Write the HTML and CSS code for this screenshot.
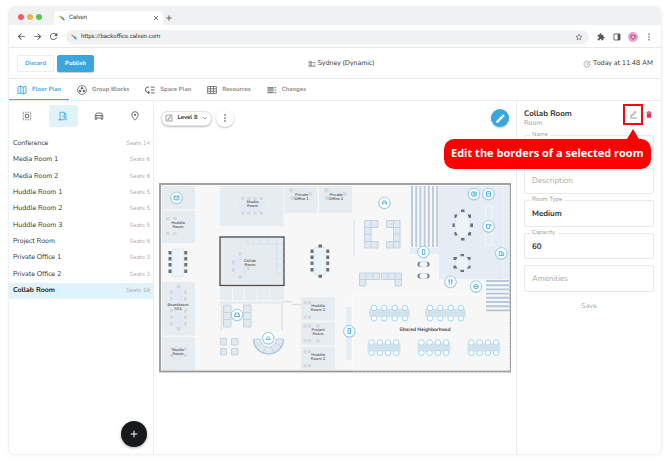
FILE: index.html
```html
<!DOCTYPE html>
<html lang="en">
<head>
<meta charset="utf-8">
<title>Calven</title>
<link rel="stylesheet" href="styles.css">
</head>
<body>
<div class="window">
  <div class="tabstrip">
    <span class="dots"><i class="dot red"></i><i class="dot amber"></i><i class="dot green"></i></span>
    <div class="browser-tab">
      <svg class="logo" viewBox="0 0 6 6"><path d="M1.2 1.5l1.2.8" stroke="#f5a623" stroke-width="1.7" stroke-linecap="round"/><path d="M3.2 2.8l1.6 1.8" stroke="#2e9bdc" stroke-width="1.7" stroke-linecap="round"/></svg>
      <span>Calven</span>
      <button class="plain close" aria-label="Close tab"><svg viewBox="0 0 6 6"><path d="M1 1l4 4M5 1l-4 4" stroke="#555" stroke-width=".8"/></svg></button>
    </div>
    <button class="plain newtab" aria-label="New tab"><svg viewBox="0 0 6 6"><path d="M3 .4v5.2M.4 3h5.2" stroke="#555" stroke-width=".9"/></svg></button>
  </div>
  <div class="toolbar">
    <button class="plain" aria-label="Back"><svg viewBox="0 0 24 24"><path fill="#555" d="M21 11H6.800l5.600-6.600L11 3l-9 9 9 9 1.400-1.400L6.800 13H21z"/></svg></button>
    <button class="plain" aria-label="Forward"><svg viewBox="0 0 24 24"><path fill="#555" d="M3 11h14.200l-5.600-6.600L13 3l9 9-9 9-1.400-1.400 5.600-6.600H3z"/></svg></button>
    <button class="plain" aria-label="Reload"><svg viewBox="0 0 24 24"><path fill="#555" d="M18.700 5.300A9.400 9.400 0 1 0 21.100 14h-2.300A7.200 7.200 0 1 1 12 4.800c2 0 3.700.8 5 2.200L13.500 10.500H22V2z"/></svg></button>
    <div class="address">
      <svg class="logo" viewBox="0 0 6 6"><path d="M1.200 1.500l1.200.8" stroke="#f5a623" stroke-width="1.700" stroke-linecap="round"/><path d="M3.200 2.800l1.600 1.800" stroke="#2e9bdc" stroke-width="1.700" stroke-linecap="round"/></svg>
      <input type="text" aria-label="Address" value="https://backoffice.calven.com">
      <svg class="ico8" viewBox="0 0 24 24"><path d="M12 3.500l2.600 5.800 6.300.6-4.800 4.200 1.400 6.200-5.500-3.300-5.500 3.300 1.400-6.200-4.800-4.200 6.300-.6z" fill="none" stroke="#666" stroke-width="2"/></svg>
    </div>
    <div class="extras">
      <svg viewBox="0 0 24 24"><path fill="#555" d="M20.500 11H19V7a2 2 0 0 0-2-2h-4V3.500a2.500 2.500 0 0 0-5 0V5H4a2 2 0 0 0-2 2v3.800h1.500a2.700 2.700 0 0 1 0 5.400H2V20a2 2 0 0 0 2 2h3.800v-1.500a2.700 2.700 0 0 1 5.400 0V22H17a2 2 0 0 0 2-2v-4h1.500a2.500 2.500 0 0 0 0-5z"/></svg>
      <svg viewBox="0 0 24 24"><path fill="none" stroke="#555" stroke-width="2.500" d="M3 3h18v18H3z"/><path fill="#555" d="M14 3h7v18h-7z"/></svg>
      <svg class="avatar" viewBox="0 0 24 24"><circle cx="12" cy="12" r="12" fill="#e8a5cf"/><path d="M5 8c4-5 7 2 11-2l4 5-7 8-7-5z" fill="#cd4d9a"/><path d="M8 8l4 3 4-2-2 6-4-1z" fill="#fbe2f1"/></svg>
      <svg viewBox="0 0 24 24"><g fill="#555"><circle cx="12" cy="3.500" r="2.200"/><circle cx="12" cy="12" r="2.200"/><circle cx="12" cy="20.500" r="2.200"/></g></svg>
    </div>
  </div>

  <header class="header">
    <div class="actions"><button class="btn">Discard</button><button class="btn primary">Publish</button></div>
    <div class="site"><svg class="ico8" viewBox="0 0 24 24"><path fill="#999" d="M12 7V3H2v18h20V7zM6 19H4v-2h2zm0-4H4v-2h2zm0-4H4V9h2zm0-4H4V5h2zm4 12H8v-2h2zm0-4H8v-2h2zm0-4H8V9h2zm0-4H8V5h2zm10 12h-8V9h8zm-2-8h-4v2h4zm0 4h-4v2h4z"/></svg>Sydney (Dynamic)</div>
    <div class="updated"><svg class="ico8" viewBox="0 0 24 24"><path d="M17 4.500A9 9 0 1 0 21 12M21 3v6h-6M12 7v6l4 2" fill="none" stroke="#888" stroke-width="2"/></svg>Today at 11:48 AM</div>
  </header>

  <nav class="nav">
    <a href="#" class="active"><svg viewBox="0 0 24 24"><path d="M2.500 4.500L9 2.500l6 2.500 6.500-2v16.500L15 21.500 9 19l-6.500 2zM9 2.500V19M15 5v16.500" fill="none" stroke="currentColor" stroke-width="2.200"/></svg>Floor Plan</a>
    <a href="#"><svg viewBox="0 0 24 24"><circle cx="12" cy="12" r="10.500" fill="none" stroke="#666" stroke-width="2"/><g fill="#666"><circle cx="12" cy="7.500" r="2.900"/><circle cx="7.500" cy="14.500" r="2.900"/><circle cx="16.500" cy="14.500" r="2.900"/></g></svg>Group Blocks</a>
    <a href="#"><svg viewBox="0 0 24 24"><path d="M10 5H7a5.500 6 0 0 0 0 13h3M7 14l4 4-4 4M14 5h9M14 12h9M14 19h9" fill="none" stroke="#666" stroke-width="2.400"/></svg>Space Plan</a>
    <a href="#"><svg viewBox="0 0 24 24"><path d="M1.500 3.500h21v17h-21zM8.500 3.500v17M15.500 3.500v17M1.500 9h21M1.500 15h21" fill="none" stroke="#666" stroke-width="2"/></svg>Resources</a>
    <a href="#"><svg viewBox="0 0 24 24"><path d="M1 4.500h15v3H1zm0 4h15v3H1zm0 4h15v3H1zm0 4h15v3H1zM18 4.500h4v3h-4zm0 6h4v3h-4zm0 6h4v3h-4z" fill="#888"/></svg>Changes</a>
  </nav>

  <div class="content">
    <aside class="rooms">
      <div class="kinds">
        <button aria-label="Desks"><svg viewBox="0 0 24 24"><path d="M3 3h18v18H3z" fill="none" stroke="#555" stroke-width="2" stroke-dasharray="2 2"/><path d="M8 8h8v8H8z" fill="none" stroke="#555" stroke-width="2"/></svg></button>
        <button class="on" aria-label="Rooms"><svg viewBox="0 0 24 24"><path d="M2 21h3V3h10v18H2M15 6h4v15h3" fill="none" stroke="#35a6df" stroke-width="2"/><path d="M11 11h2v3h-2z" fill="#35a6df"/></svg></button>
        <button aria-label="Parking"><svg viewBox="0 0 24 24"><path d="M3 11l3-6h12l3 6v9h-3v-3H6v3H3zM3 11h18" fill="none" stroke="#555" stroke-width="2"/><circle cx="7" cy="14" r="1.500" fill="#555"/><circle cx="17" cy="14" r="1.500" fill="#555"/></svg></button>
        <button aria-label="Points of interest"><svg viewBox="0 0 24 24"><path d="M12 22S4.500 14.500 4.500 9a7.500 7.500 0 0 1 15 0C19.500 14.500 12 22 12 22z" fill="none" stroke="#555" stroke-width="2"/><circle cx="12" cy="9" r="2.500" fill="#555"/></svg></button>
      </div>
      <ul class="list">
        <li><span>Conference</span><small>Seats 14</small></li>
        <li><span>Media Room 1</span><small>Seats 6</small></li>
        <li><span>Media Room 2</span><small>Seats 6</small></li>
        <li><span>Huddle Room 1</span><small>Seats 5</small></li>
        <li><span>Huddle Room 2</span><small>Seats 5</small></li>
        <li><span>Huddle Room 3</span><small>Seats 5</small></li>
        <li><span>Project Room</span><small>Seats 6</small></li>
        <li><span>Private Office 1</span><small>Seats 3</small></li>
        <li><span>Private Office 2</span><small>Seats 3</small></li>
        <li class="selected"><span>Collab Room</span><small>Seats 16</small></li>
      </ul>
      <button class="add" aria-label="Add room"><svg viewBox="0 0 8 8"><path d="M4 .7v6.600M.7 4h6.600" stroke="#fff" stroke-width="1"/></svg></button>
    </aside>

    <main class="plan">
      <div class="plan-bar">
        <button class="level"><svg viewBox="0 0 24 24"><path d="M3 3h18v18H3zM7 17h4v-5h4V7h3" fill="none" stroke="#777" stroke-width="2"/></svg>Level 8<svg class="caret" viewBox="0 0 6 6"><path d="M1 2l2 2 2-2" fill="none" stroke="#999" stroke-width=".9"/></svg></button>
        <button class="round" aria-label="More"><svg viewBox="0 0 24 24"><g fill="#444"><circle cx="12" cy="3" r="2.500"/><circle cx="12" cy="12" r="2.500"/><circle cx="12" cy="21" r="2.500"/></g></svg></button>
        <button class="round edit" aria-label="Edit plan"><svg viewBox="0 0 24 24"><path fill="#fff" d="M3 17.200V21h3.800L17.900 9.900l-3.800-3.800zM20.700 7a1 1 0 0 0 0-1.400l-2.300-2.300a1 1 0 0 0-1.400 0l-1.900 1.900 3.800 3.800z"/></svg></button>
      </div>
      <svg class="map" viewBox="159 183 352 190" role="img" aria-label="Level 8 floor plan">
        <defs>
          <g id="seat4"><path d="M-6 -5h3.200v3.200h-3.200zM-1.600 -5h3.200v3.200h-3.200z"/></g>
          <g id="pin"><circle r="6.200" cy=".6" fill="#b9c7d0" opacity=".55" stroke="none"/><circle r="5.700" fill="#fff" stroke="#86cbe9" stroke-width=".9"/></g>
          <g id="bench4">
            <rect x="-20.500" y="-4" width="41" height="8" fill="#d7e5ed"/><path d="M-10 -4v8M0 -4v8M10 -4v8M-20 0h40" stroke="#c3d7e2" stroke-width=".5"/>
            <g fill="#fff" stroke="#90d3f0" stroke-width=".9"><circle cx="-15.500" cy="-5" r="2.800"/><circle cx="-5.200" cy="-5" r="2.800"/><circle cx="5.200" cy="-5" r="2.800"/><circle cx="15.500" cy="-5" r="2.800"/><circle cx="-15.500" cy="5.300" r="2.800"/><circle cx="-5.200" cy="5.300" r="2.800"/><circle cx="5.200" cy="5.300" r="2.800"/><circle cx="15.500" cy="5.300" r="2.800"/></g>
          </g>
          <g id="bench3">
            <rect x="-16.500" y="-4" width="33" height="8" fill="#d7e5ed"/><path d="M-8 -4v8M0 -4v8M8 -4v8M-16 0h32" stroke="#c3d7e2" stroke-width=".5"/>
            <g fill="#fff" stroke="#90d3f0" stroke-width=".9"><circle cx="-12.400" cy="-5" r="2.800"/><circle cx="-4.200" cy="-5" r="2.800"/><circle cx="4.100" cy="-5" r="2.800"/><circle cx="12.300" cy="-5" r="2.800"/><circle cx="-12.400" cy="5.300" r="2.800"/><circle cx="-4.200" cy="5.300" r="2.800"/><circle cx="4.100" cy="5.300" r="2.800"/><circle cx="12.300" cy="5.300" r="2.800"/></g>
          </g>
          <g id="meeting">
            <path d="M-9.500 -12h3.200v3.500h-3.200zM-9.500 -6h3.200v3.500h-3.200zM-9.500 0h3.200v3.500h-3.200zM-9.500 6.500h3.200V10h-3.200zM6 -12h3.200v3.500H6zM6 -6h3.200v3.500H6zM6 0h3.200v3.500H6zM6 6.500h3.200V10H6z" fill="#6b6f73"/>
            <rect x="-6" y="-14" width="12" height="27.500" rx="2" fill="#edf4f8" stroke="#d3e2ec" stroke-width=".7"/>
          </g>
          <g id="duo"><rect x="-6" y="-2.500" width="12" height="5" rx="2.500" fill="#777"/><ellipse rx="4" ry="3" fill="#f0f6fa" stroke="#cbd8e0" stroke-width=".6"/></g>
        </defs>
        <rect x="160" y="184" width="350.500" height="187.500" fill="#f7f7f7" stroke="#999" stroke-width="1.800"/>

        <g fill="#e6ecf0">
          <path d="M162 186h33v23h-33zM162 210.500h33V243h-33zM162 282h33v53.500h-33zM162 337h33v33h-33z"/>
          <path d="M220 186h63.500v40H220zM284.500 186h33v27h-33zM319 186h33v27h-33z"/>
          <path d="M301 297.500h34v23h-34zM301 322h34v23h-34zM301 346.500h34v23h-34z"/>
          <path d="M220 287h64v13h-64z"/>
        </g>
        <path d="M232.500 287v13M244.500 287v13M257 287v13M270 287v13" stroke="#f7f7f7" stroke-width=".8"/>
        <rect x="220" y="237" width="64" height="48.500" fill="#e5ebef" stroke="#4b4b4b" stroke-width="1.300"/>
        <path d="M246.500 238v6h36.500M253.500 238v6M260.500 238v6M268 238v6M276.500 238v36h7M276.500 251h7M276.500 258.500h7M276.500 266h7" fill="none" stroke="#d2deec" stroke-width=".7"/>
        <path d="M220 302.500h63M221.500 302v28M282 302v28" fill="none" stroke="#e1e9f0" stroke-width="2"/>
        <path d="M283 301.500h9M292 304.500h9" stroke="#dfdfdf" stroke-width="1.500"/>
        <rect x="346" y="307" width="5.500" height="53" fill="#e7edf3"/>
        <rect x="353" y="220.500" width="2" height="35" fill="#e2e9f2"/>

        <rect x="439" y="186" width="70.500" height="93" fill="#e6ecf4"/>
        <rect x="410" y="248" width="29" height="6" fill="#e6ecf4"/>
        <rect x="485.500" y="206" width="6.500" height="39" fill="none" stroke="#f4f7fa" stroke-width=".9"/>
        <path d="M503 186v93" stroke="#f4f7fa" stroke-width=".8"/>
        <path d="M412 186v61M416.200 186v61M420.400 186v61M424.600 186v61M428.800 186v61M433 186v61M437.200 186v61" stroke="#b9cbdc" stroke-width="1.900"/>
        <path d="M486 281h24M486 285.200h24M486 289.400h24M486 293.600h24M486 297.800h24M486 302h24M486 306.200h24M486 310.400h24" stroke="#b5c8da" stroke-width="1.900"/>
        <path d="M352.500 370V294.500H486M509.300 370V311" fill="none" stroke="#fff" stroke-width="1.300" stroke-dasharray="1.500 1.500"/>
        <path d="M353 370.800h156.500M509.800 370V187" stroke="#e1e4e6" stroke-width=".8" stroke-dasharray="2 2"/>

        <g fill="#d3d9df">
          <path d="M166 217h3.500v3H166zM173 217h3.500v3H173zM166 232h3.500v3H166zM173 232h3.500v3H173z"/>
          <path d="M241 197h3.500v3H241zM247 197h3.500v3H247zM253 197h3.500v3H253zM259.500 197h3.500v3h-3.500zM241 211.500h3.500v3H241zM247 211.500h3.500v3H247zM253 211.500h3.500v3H253zM259.500 211.500h3.500v3h-3.500z"/>
          <path d="M238.500 252.500h3.500v3h-3.500zM232 260.500h3v4h-3zM232 268h3v4h-3zM246 267h3.500v3.500H246zM238.500 275.500h3.500v3h-3.500z"/>
          <path d="M176.500 285h4v3.500h-4zM170 290.500h3v3.500h-3zM170 297h3v3.500h-3zM170 309h3v3.500h-3zM170 315.500h3v3.500h-3zM170 322h3v3.500h-3zM184 290.500h3v3.500h-3zM184 297h3v3.500h-3zM184 309h3v3.500h-3zM184 315.500h3v3.500h-3zM184 322h3v3.500h-3zM176.500 327h4v3.500h-4z"/>
          <path d="M170 347.500h3v3h-3zM170 354h3v3h-3zM184 347.500h3v3h-3zM184 354h3v3h-3z"/>
          <circle cx="291.500" cy="190.500" r="2.300"/><circle cx="292.500" cy="198" r="2.300"/><circle cx="310" cy="194" r="2.300"/><circle cx="326.500" cy="190.500" r="2.300"/><circle cx="327" cy="198" r="2.300"/><circle cx="344.500" cy="194" r="2.300"/>
          <use href="#seat4" x="309.500" y="306"/><use href="#seat4" x="309.500" y="320.500"/><use href="#seat4" x="309.500" y="329.500"/><use href="#seat4" x="309.500" y="344"/><use href="#seat4" x="309.500" y="355"/><use href="#seat4" x="309.500" y="369"/>
          <path d="M316.500 324.500h3.200v3.200h-3.200zM316.500 339h3.200v3.200h-3.200z"/>
        </g>
        <g fill="#e2e9f3"><rect x="239" y="201" width="26" height="10"/><rect x="235" y="256" width="12" height="19"/><rect x="174" y="289" width="9" height="37"/><rect x="173.500" y="346" width="10" height="14"/><rect x="294" y="188" width="14" height="10"/><rect x="329" y="188" width="13" height="10"/></g>

        <use href="#meeting" x="178" y="263"/>
        <use href="#meeting" x="320" y="261.500"/>
        <path d="M318.500 244.500h3.500v3h-3.500zM318.500 274.800h3.500v3h-3.500z" fill="#6b6f73"/>

        <g fill="#6b6f73"><path d="M461 209.500h3.500v3H461zM461 237.500h3.500v3H461zM452.500 223.500h3v3.500h-3zM470 223.500h3v3.500h-3zM454.500 214.500h3v3.500h-3zM468 214.500h3v3.500h-3zM454.500 232h3v3.500h-3zM468 232h3v3.500h-3z"/><path d="M460.500 254h3.500v3h-3.500zM460.500 269h3.500v3h-3.500zM453.500 257h3.500v3h-3.500zM467 257h3.500v3H467zM453.500 265.500h3.500v3h-3.500zM467 265.500h3.500v3H467z"/></g>
        <ellipse cx="462.500" cy="225" rx="7.500" ry="12.800" fill="#edf4f8" stroke="#d3e2ec" stroke-width=".7"/>
        <circle cx="462.300" cy="263" r="6.800" fill="#edf4f8" stroke="#d3e2ec" stroke-width=".7"/>
        <use href="#duo" x="423.500" y="264.300"/><use href="#duo" x="423.500" y="276"/>

        <g fill="#e0e9f2" stroke="#b9cedd" stroke-width=".8">
          <path d="M364.500 220.500h13.500v7h-7v14h7v6.500h-13.500zM371 220.500v7M364.500 227.500h6.500M364.500 234h6.500M364.500 241.500h6.500M371 241.500v6.500"/>
          <path d="M400 220.500h-13.500v7h7v14h-7v6.500H400zM393.500 220.500v7M400 227.500h-6.500M400 234h-6.500M400 241.500h-6.500M393.500 241.500v6.500"/>
          <path d="M359.500 273h20v6.500h-13.500v6.500h-6.500zM366 273v6.500M373 273v6.500M359.500 279.500h6.500"/>
          <path d="M401.500 273h-20v6.500H395v6.500h6.500zM395 273v6.500M388 273v6.500M401.500 279.500H395"/>
          <path d="M223.500 305h7.500v22h-7.500zM223.500 312.500h7.500M223.500 319.500h7.500M243.500 305h7.500v22h-7.500zM243.500 312.500h7.500M243.500 319.500h7.500"/>
          <path d="M220.500 338.500h6v6.500h-6zM231.500 338.500h6.500v6.500h-6.500zM220.500 348.500h6v6.500h-6zM231.500 348.500h6.500v6.500h-6.500z"/>
          <path d="M253.500 339a15 15 0 0 0 30 0h-7a8 8 0 0 1-16 0zM255.500 347l6.500-4M263 353l3-6.500M274 353l-3-6.500M281.500 347l-6.500-4"/>
        </g>
        <path d="M253.500 339a15 15 0 0 0 30 0" fill="none" stroke="#aac4d6" stroke-width="1.200"/>

        <use href="#bench4" x="389.500" y="313"/><use href="#bench4" x="445.500" y="313"/>
        <use href="#bench3" x="384" y="347.500"/><use href="#bench3" x="433.800" y="347.500"/><use href="#bench3" x="483.800" y="347.500"/>

        <g class="room-label">
          <text x="178" y="224">Huddle</text><text x="178" y="228">Room</text>
          <text x="252.500" y="203">Studio</text><text x="252.500" y="207">Room</text>
          <text x="301.500" y="196">Private</text><text x="301.500" y="200">Office 1</text>
          <text x="336" y="196">Private</text><text x="336" y="200">Office 2</text>
          <text x="250" y="261.500">Collab</text><text x="250" y="265.500">Room</text>
          <text x="178" y="306">Boardroom</text><text x="178" y="310">A01</text>
          <text x="178" y="351">Studio</text><text x="178" y="355">Room</text>
          <text x="318" y="306.500">Huddle</text><text x="318" y="310.500">Room 1</text>
          <text x="318" y="331">Project</text><text x="318" y="335">Room</text>
          <text x="318" y="355.500">Huddle</text><text x="318" y="359.500">Room 2</text>
        </g>
        <text class="zone-label" x="425" y="331">Shared Neighborhood</text>

        <g fill="none" stroke="#45aee0" stroke-width=".9">
          <use href="#pin" x="176.500" y="197.800"/><path d="M174 196h5v3.800h-5zM174.500 196.500l2 1.500 2-1.500"/>
          <use href="#pin" x="384.500" y="202.800"/><path d="M382.500 204.500v-2l.8-1.500h2.400l.8 1.500v2M382.500 203h4"/>
          <use href="#pin" x="474" y="194"/><path d="M471.800 192h4.500v4h-4.500zM474 192v4M474 194h2"/>
          <use href="#pin" x="488.500" y="194"/><path d="M486.500 191.700h4v4.600h-4zM486.500 193.800h4"/>
          <use href="#pin" x="488.500" y="226.300"/><path d="M486.500 224.300h4.500v1.500h-1.500v2.700h-3z"/>
          <use href="#pin" x="501.300" y="253.300"/><path d="M499.200 251.500h2.500v4h-2.500zM501.700 253h2v2.500h-2"/>
          <use href="#pin" x="423.500" y="252"/><path d="M422.300 249.500h2.500v5h-2.500z"/>
          <use href="#pin" x="450.500" y="281.800"/><path d="M449.300 279v5.500M451.800 279v5.500M448.300 281h1.800M451 281h1.800"/>
          <use href="#pin" x="476" y="286.500"/><circle cx="476" cy="286.500" r="2.300"/><path d="M474 286.500h4"/>
          <use href="#pin" x="237" y="314.800"/><path d="M234.500 314.500v2h5v-2M235.500 315v-2h3v2"/>
          <use href="#pin" x="268.300" y="338.200"/><path d="M266 339.500h4.500M266.500 339c0-3 3.600-3 3.600 0"/>
          <use href="#pin" x="349.300" y="331.200"/><path d="M348 328.500h2.500v5H348z"/>
        </g>
      </svg>
    </main>

    <aside class="details">
      <div class="title-row">
        <div><h1>Collab Room</h1><p>Room</p></div>
        <div class="tools">
          <button class="borders" aria-label="Edit borders"><svg viewBox="0 0 24 24"><path d="M5 15L16.500 3.500l2.500 2.500L8 17H5zM3 21.500h18" fill="none" stroke="#777" stroke-width="2"/></svg></button>
          <button class="plain" aria-label="Delete room"><svg viewBox="0 0 6 7"><path fill="#db3458" d="M.5 .8h1.500L2.500.2h1l.5.6h1.500v1h-5zM.8 2.200h4.400V6q0 .8-.8.8H1.600Q.8 6.800.8 6z"/></svg></button>
        </div>
      </div>
      <form class="form">
        <div class="fields">
          <div class="field"><label for="name">Name</label><input id="name" type="text" value="Collab Room"></div>
          <div class="field"><input aria-label="Description" type="text" placeholder="Description"></div>
          <div class="field"><label for="type">Room Type</label><input id="type" type="text" value="Medium"></div>
          <div class="field"><label for="capacity">Capacity</label><input id="capacity" type="text" value="60"></div>
          <div class="field"><input aria-label="Amenities" type="text" placeholder="Amenities"></div>
        </div>
        <button type="button" class="save">Save</button>
      </form>
      <div class="callout">Edit the borders of a selected room</div>
    </aside>
  </div>
</div>
</body>
</html>
```
FILE: styles.css
```css
* { box-sizing: border-box; }

body {
  margin: 0;
  padding: 7px 9px 11px;
  min-height: 100vh;
  display: flex;
  background: #fff;
  color: #333;
  font: 7px/10px Nunito, Lato, "Open Sans", sans-serif;
  text-rendering: geometricPrecision;
}

button, input { font: inherit; color: inherit; margin: 0; text-rendering: inherit; }
button { padding: 0; display: flex; align-items: center; justify-content: center; }
svg { display: block; flex: none; }

.plain { border: 0; background: none; }

.window {
  flex: 1;
  display: flex;
  flex-direction: column;
  border-radius: 6px;
  box-shadow: 0 0 0 1px #f1f1f3, 0 1px 6px rgba(0, 0, 0, .05);
}

/* Browser chrome */
.tabstrip {
  height: 18px;
  display: flex;
  align-items: flex-end;
  padding-left: 9px;
  background: #f0f1f3;
  border-radius: 6px 6px 0 0;
}
.dots { display: flex; gap: 3px; height: 18px; align-items: center; width: 36px; padding-top: 2px; }
.dot { width: 6px; height: 6px; border-radius: 50%; }
.red { background: #f45d5d; }
.amber { background: #f2b644; }
.green { background: #58c557; }
.browser-tab {
  width: 109px;
  height: 14px;
  display: flex;
  align-items: center;
  gap: 4px;
  padding: 0 4px 0 5px;
  background: #fff;
  border-radius: 4px 4px 0 0;
  font: 6px/8px Roboto, sans-serif;
}
.logo { width: 6px; height: 6px; }
.close { margin-left: auto; }
.close svg { width: 6px; height: 6px; }
.newtab { height: 14px; padding-left: 3px; }
.newtab svg { width: 6px; height: 6px; }

.toolbar {
  height: 23px;
  display: flex;
  align-items: center;
  gap: 7px;
  padding: 1px 8px 0;
  border-bottom: 1px solid #e7e8ea;
}
.toolbar .plain svg { width: 9px; height: 9px; }
.address {
  flex: 1;
  height: 14px;
  display: flex;
  align-items: center;
  gap: 4px;
  margin-left: 1px;
  padding: 0 6px 0 5px;
  border-radius: 7px;
  background: #f0f1f3;
}
.address input {
  flex: 1;
  min-width: 0;
  height: 10px;
  border: 0;
  padding: 0;
  background: none;
  font: 6px/10px Roboto, sans-serif;
}
.ico8 { width: 8px; height: 8px; }
.extras { display: flex; gap: 8px; align-items: center; padding-left: 1px; }
.extras svg { width: 8px; height: 8px; }
.extras .avatar { width: 10px; height: 10px; margin: 0 -1px; }

/* Page header */
.header {
  height: 31px;
  display: grid;
  grid-template-columns: 1fr auto 1fr;
  align-items: center;
  padding: 1px 8px 0;
  border-bottom: 1px solid #e9e9eb;
}
.actions { display: flex; gap: 3px; }
.btn {
  width: 37px;
  height: 17px;
  border: 1px solid #e9eef2;
  border-radius: 2px;
  background: #fff;
  color: #3ba9df;
  font-size: 6px;
  font-weight: bold;
}
.btn.primary { border-color: #3ba6dc; background: #3ba6dc; color: #fff; box-shadow: 0 1px 1px rgba(0, 0, 0, .2); }
.site, .updated { display: flex; align-items: center; gap: 2px; }
.site { padding-left: 12px; }
.updated { justify-self: end; }

.nav {
  height: 22px;
  display: flex;
  border-bottom: 1px solid #ececee;
}
.nav a {
  min-width: 59px;
  display: flex;
  align-items: center;
  gap: 5px;
  padding: 1px 8px 0;
  color: #8c8c8c;
  font-size: 6px;
  font-weight: bold;
  text-decoration: none;
}
.nav a.active { color: #3ba9df; box-shadow: inset 0 -1px #3ba9df; }
.nav svg { width: 10px; height: 10px; }

/* Work area */
.content { flex: 1; display: flex; }

.rooms {
  width: 145px;
  display: flex;
  flex-direction: column;
  border-right: 1px solid #ececee;
}
.kinds { display: grid; grid-template-columns: repeat(4, 1fr); padding: 4px 0 0; }
.kinds button { width: 29px; height: 22px; justify-self: center; border: 0; border-radius: 3px; background: none; }
.kinds .on { background: #e0f3fb; }
.kinds svg { width: 10px; height: 10px; }
.list {
  height: 163px;
  margin: 9px 0 0;
  padding: 0;
  display: grid;
  grid-auto-rows: 1fr;
  list-style: none;
}
.list li { display: flex; align-items: center; justify-content: space-between; padding: 0 3px 0 4px; }
.list small { font-size: 6px; color: #aaa; }
.list .selected { background: #e0f3fb; }
.selected span { font-weight: bold; color: #222; }
.add {
  width: 26px;
  height: 26px;
  margin: auto 6px 7px auto;
  border: 0;
  border-radius: 50%;
  background: #17191c;
  box-shadow: 0 1px 3px rgba(0, 0, 0, .35);
}
.add svg { width: 8px; height: 8px; }

.plan { flex: 1; min-width: 0; padding: 8px 5px 0 5px; }
.plan-bar { display: flex; align-items: center; gap: 4px; padding: 0 2px; }
.level {
  width: 51px;
  height: 15px;
  gap: 4px;
  border: 1px solid #e2e2e2;
  border-radius: 8px;
  background: #fff;
  box-shadow: 0 1px 2px rgba(0, 0, 0, .25);
  font-size: 6px;
  font-weight: bold;
}
.level svg { width: 8px; height: 8px; }
.level .caret { width: 6px; height: 6px; }
.round {
  width: 18px;
  height: 18px;
  border: 0;
  border-radius: 50%;
  background: #fff;
  box-shadow: 0 1px 2px rgba(0, 0, 0, .25);
}
.round svg { width: 8px; height: 8px; }
.round.edit { margin-left: auto; background: #3ba6dc; }
.round.edit svg { width: 11px; height: 11px; }

.map { width: 100%; margin-top: 56px; }
.room-label { font-size: 4px; font-weight: bold; fill: #666; text-anchor: middle; }
.zone-label { font-size: 5px; font-weight: bold; fill: #444; text-anchor: middle; }

.details {
  position: relative;
  width: 145px;
  padding: 3px 7px 0 7px;
  border-left: 1px solid #e9edf0;
}
.title-row { display: flex; justify-content: space-between; }
h1 { margin: 4px 0 0; font-size: 8px; line-height: 11px; color: #333; }
.title-row p { margin: 0; color: #999; }
.tools { display: flex; gap: 3px; }
.tools .plain { height: 21px; padding-right: 2px; }
.tools .plain svg { width: 6px; height: 7px; }
.borders { width: 20px; height: 21px; border: 2px solid #f80616; background: #fff; }
.borders svg { width: 9px; height: 9px; }
.form { margin-top: 6px; }
.fields { height: 157px; display: grid; grid-auto-rows: 1fr; gap: 6px; }
.field { position: relative; border: 1px solid #eaeaea; border-radius: 2px; }
.field label {
  position: absolute;
  top: -5px;
  left: 5px;
  padding: 0 2px;
  background: #fff;
  color: #999;
  font-size: 6px;
  line-height: 8px;
}
.field input {
  width: 100%;
  height: 100%;
  padding: 0 7px;
  border: 0;
  background: none;
  font-size: 8px;
  font-weight: bold;
}
.field input::placeholder { color: #aaa; opacity: 1; font-weight: normal; }
.save { margin: 10px auto 0; border: 0; background: none; color: #aaa; }

.callout {
  position: absolute;
  top: 38px;
  right: 10px;
  min-width: 207px;
  height: 30px;
  padding: 0 7px;
  border-radius: 10px;
  background: #fe0000;
  color: #fff;
  font-family: "Open Sans", sans-serif;
  font-size: 11px;
  line-height: 30px;
  font-weight: bold;
  white-space: nowrap;
}
.callout::before {
  content: "";
  position: absolute;
  right: 12px;
  bottom: 100%;
  border: 6px solid transparent;
  border-top: 0;
  border-bottom: 10px solid #fe0000;
}
```
